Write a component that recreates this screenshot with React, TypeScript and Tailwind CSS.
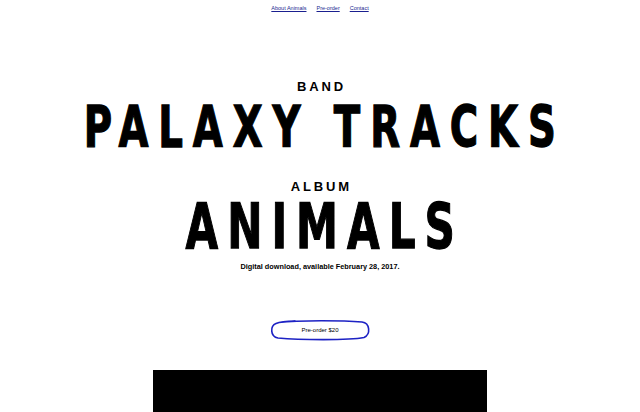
import React from "react";

const display = { fontFamily: '"DejaVu Sans", "Liberation Sans", sans-serif' };
const body = { fontFamily: '"Liberation Sans", Arial, sans-serif' };

function PreorderButton() {
  return (
    <a href="#" className="relative flex h-[24px] w-[102px] items-center justify-center text-[6px] text-black" style={body}>
      <svg className="absolute inset-0" width="102" height="24" viewBox="0 0 102 24" fill="none">
        <path
          d="M10 4.5 C 30 2, 75 2.5, 93 4 C 101 5, 102 16, 95 19.5 C 80 22.5, 30 22, 9 20 C 1 18.5, 1 8, 7 5.5 C 12 3.5, 20 3.2, 26 3"
          stroke="#1d22c4"
          strokeWidth="1.6"
          strokeLinecap="round"
        />
      </svg>
      <span className="relative">Pre-order $20</span>
    </a>
  );
}

export default function App() {
  return (
    <div className="flex h-[412px] w-full flex-col items-center overflow-hidden bg-white antialiased" style={body}>
      <nav className="mt-[4px] flex gap-[10px] text-[5.5px] leading-[8px] text-[#1a1f8f]">
        <a href="#" className="underline underline-offset-1">About Animals</a>
        <a href="#" className="underline underline-offset-1">Pre-order</a>
        <a href="#" className="underline underline-offset-1">Contact</a>
      </nav>

      <p className="mt-[68px] pl-[0.22em] text-[13px] font-bold leading-none tracking-[0.22em] text-black">BAND</p>
      <h1 className="mt-[6px] whitespace-nowrap text-[57px] font-bold leading-none text-black" style={display}>
        <span className="inline-block origin-center scale-x-[0.68] pl-[0.255em] tracking-[0.255em] [-webkit-text-stroke:1.3px_black]">
          PALAXY TRACKS
        </span>
      </h1>

      <p className="mt-[24px] pl-[0.22em] text-[13px] font-bold leading-none tracking-[0.22em] text-black">ALBUM</p>
      <h2 className="mt-[3px] whitespace-nowrap text-[62px] font-bold leading-none text-black" style={display}>
        <span className="inline-block origin-center scale-x-[0.68] pl-[0.213em] tracking-[0.213em] [-webkit-text-stroke:1.3px_black]">
          ANIMALS
        </span>
      </h2>

      <p className="mt-[5px] text-[7.3px] font-bold leading-none text-black">Digital download, available February 28, 2017.</p>

      <div className="mt-[48px]">
        <PreorderButton />
      </div>

      <div className="mt-[28px] h-[60px] w-[334px] shrink-0 bg-black" />
    </div>
  );
}
